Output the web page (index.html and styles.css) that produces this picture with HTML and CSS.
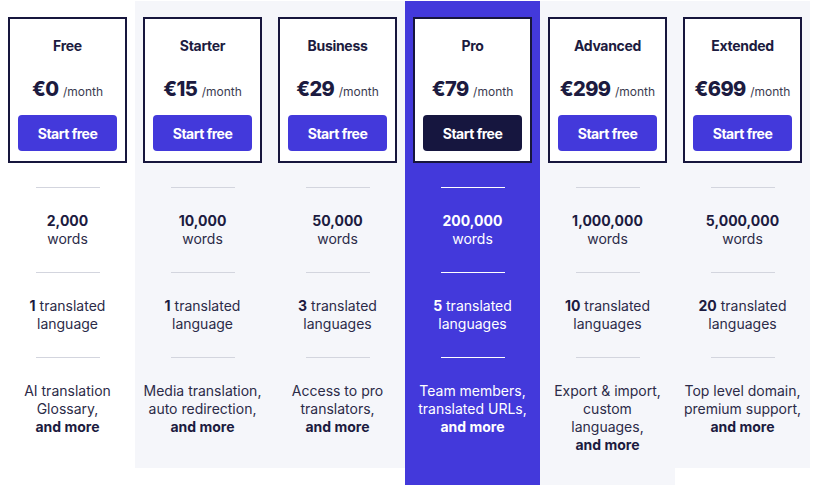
FILE: index.html
```html
<!DOCTYPE html>
<html lang="en">

<head>
    <meta charset="UTF-8">
    <meta name="viewport" content="width=device-width, initial-scale=1.0">
    <title>Pricing</title>
    <link rel="stylesheet" href="styles.css">
</head>

<body>
    <div class="pricing">
        <!-- Free -->
        <div class="plan">
            <div class="card">
                <h3>Free</h3>
                <div class="price"><strong>€0</strong> <span>/month</span></div>
                <button>Start free</button>
            </div>
            <div class="divider"></div>
            <p><strong>2,000</strong><br>words</p>
            <div class="divider"></div>
            <p><strong>1</strong> translated<br>language</p>
            <div class="divider"></div>
            <p>AI translation<br>Glossary,<br><strong>and more</strong></p>
        </div>

        <!-- Starter -->
        <div class="plan plan-gray">
            <div class="card">
                <h3>Starter</h3>
                <div class="price"><strong>€15</strong> <span>/month</span></div>
                <button>Start free</button>
            </div>
            <div class="divider"></div>
            <p><strong>10,000</strong><br>words</p>
            <div class="divider"></div>
            <p><strong>1</strong> translated<br>language</p>
            <div class="divider"></div>
            <p>Media translation,<br>auto redirection,<br><strong>and more</strong></p>
        </div>

        <!-- Business -->
        <div class="plan plan-gray">
            <div class="card">
                <h3>Business</h3>
                <div class="price"><strong>€29</strong> <span>/month</span></div>
                <button>Start free</button>
            </div>
            <div class="divider"></div>
            <p><strong>50,000</strong><br>words</p>
            <div class="divider"></div>
            <p><strong>3</strong> translated<br>languages</p>
            <div class="divider"></div>
            <p>Access to pro<br>translators,<br><strong>and more</strong></p>
        </div>

        <!-- Pro -->
        <div class="plan plan-pro">
            <div class="card">
                <h3>Pro</h3>
                <div class="price"><strong>€79</strong> <span>/month</span></div>
                <button>Start free</button>
            </div>
            <div class="divider"></div>
            <p><strong>200,000</strong><br>words</p>
            <div class="divider"></div>
            <p><strong>5</strong> translated<br>languages</p>
            <div class="divider"></div>
            <p>Team members,<br>translated URLs,<br><strong>and more</strong></p>
        </div>

        <!-- Advanced -->
        <div class="plan plan-gray">
            <div class="card">
                <h3>Advanced</h3>
                <div class="price"><strong>€299</strong> <span>/month</span></div>
                <button>Start free</button>
            </div>
            <div class="divider"></div>
            <p><strong>1,000,000</strong><br>words</p>
            <div class="divider"></div>
            <p><strong>10</strong> translated<br>languages</p>
            <div class="divider"></div>
            <p>Export &amp; import,<br>custom<br>languages,<br><strong>and more</strong></p>
        </div>

        <!-- Extended -->
        <div class="plan plan-gray">
            <div class="card">
                <h3>Extended</h3>
                <div class="price"><strong>€699</strong> <span>/month</span></div>
                <button>Start free</button>
            </div>
            <div class="divider"></div>
            <p><strong>5,000,000</strong><br>words</p>
            <div class="divider"></div>
            <p><strong>20</strong> translated<br>languages</p>
            <div class="divider"></div>
            <p>Top level domain,<br>premium support,<br><strong>and more</strong></p>
        </div>
    </div>
</body>

</html>
```

FILE: styles.css
```css
body {
    font-family: Inter, "Noto Sans", sans-serif;
    margin: 0;
    padding: 0;
    background-color: white;
    color: #2c2b48;
    overflow: hidden;
}

.pricing {
    display: flex;
    align-items: flex-start;
    padding-top: 1px;
}

.plan {
    width: 135px;
    box-sizing: border-box;
    padding: 16px 8px 32px;
    text-align: center;
}

.plan-gray {
    background-color: #f5f6fa;
}

.plan-pro {
    background-color: #4339db;
    color: white;
    padding-bottom: 60px;
}

.card {
    background-color: white;
    border: 2px solid #17163d;
    padding: 17px 8px 10px;
    color: #1c1b40;
}

h3 {
    margin: 0 0 19px;
    font-size: 14px;
    line-height: 20px;
    font-weight: 700;
    letter-spacing: -0.3px;
}

.price {
    height: 28px;
    line-height: 28px;
    margin-bottom: 12px;
}

.price strong {
    font-size: 20px;
    font-weight: 800;
    letter-spacing: -0.6px;
}

.price span {
    font-size: 12px;
    color: #3b3b50;
}

button {
    display: block;
    width: 100%;
    height: 36px;
    padding: 0;
    background-color: #4339db;
    color: white;
    border: none;
    border-radius: 4px;
    font-family: inherit;
    font-size: 14px;
    font-weight: 700;
    letter-spacing: -0.5px;
    cursor: pointer;
}

.plan-pro button {
    background-color: #16163f;
}

.divider {
    width: 64px;
    height: 1px;
    margin: 24px auto;
    background-color: #d3d5de;
}

.plan-pro .divider {
    background-color: #ffffff;
}

p {
    margin: 0;
    font-size: 14px;
    line-height: 18px;
}

p strong {
    font-weight: 700;
    color: #1c1b40;
}

.plan-pro p strong {
    color: white;
}
```
